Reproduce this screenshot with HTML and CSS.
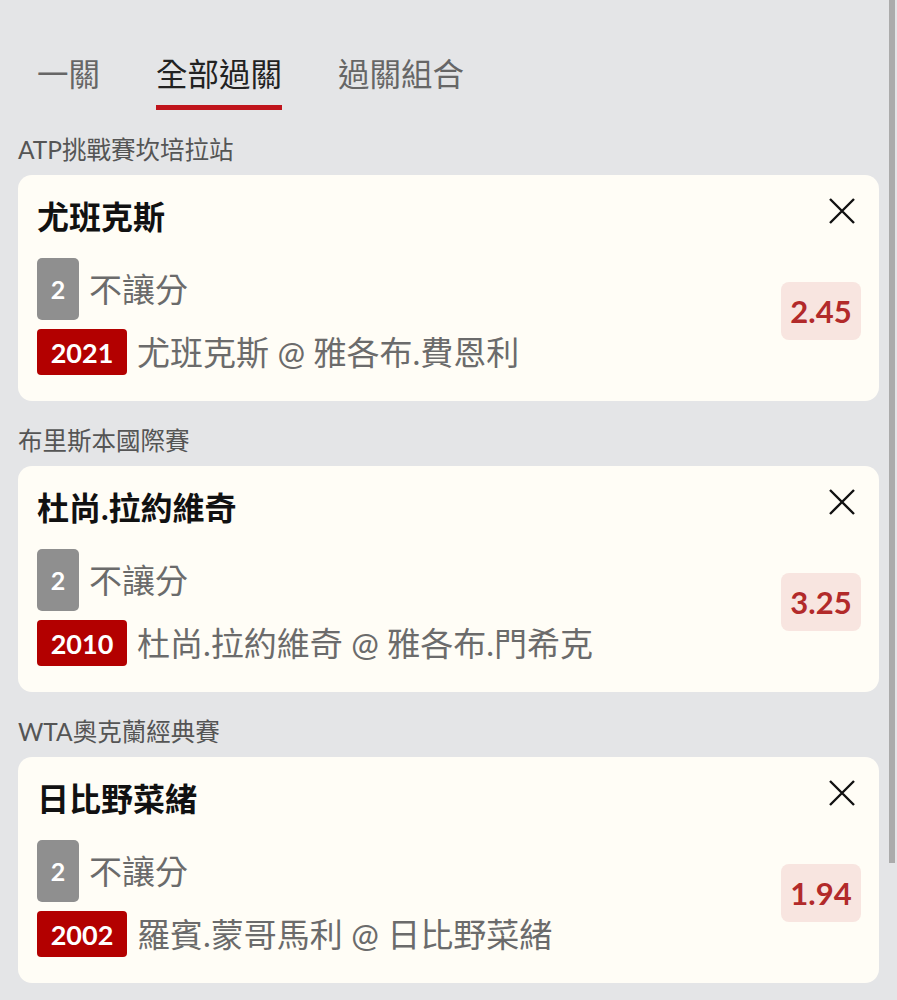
FILE: index.html
```html
<!DOCTYPE html>
<html lang="zh-Hant">
<head>
    <meta charset="UTF-8">
    <meta name="viewport" content="width=device-width, initial-scale=1.0">
    <title>過關</title>
    <link rel="stylesheet" href="styles.css">
</head>
<body>
    <div id="page">
        <nav class="tabs">
            <div class="tab">一關</div>
            <div class="tab active">全部過關</div>
            <div class="tab">過關組合</div>
        </nav>

        <div class="league">ATP挑戰賽坎培拉站</div>
        <div class="pick">
            <div class="pick-main">
                <div class="pick-title">尤班克斯</div>
                <div class="pick-row">
                    <span class="bet-type">2</span>
                    <span class="pick-text">不讓分</span>
                </div>
                <div class="pick-row">
                    <span class="match-no">2021</span>
                    <span class="pick-text">尤班克斯 @ 雅各布.費恩利</span>
                </div>
            </div>
            <div class="pick-side">
                <button class="close" aria-label="移除">
                    <svg viewBox="0 0 28 28" width="28" height="28"><path d="M2 2 L26 26 M26 2 L2 26"/></svg>
                </button>
                <div class="odds">2.45</div>
            </div>
        </div>

        <div class="league">布里斯本國際賽</div>
        <div class="pick">
            <div class="pick-main">
                <div class="pick-title">杜尚.拉約維奇</div>
                <div class="pick-row">
                    <span class="bet-type">2</span>
                    <span class="pick-text">不讓分</span>
                </div>
                <div class="pick-row">
                    <span class="match-no">2010</span>
                    <span class="pick-text">杜尚.拉約維奇 @ 雅各布.門希克</span>
                </div>
            </div>
            <div class="pick-side">
                <button class="close" aria-label="移除">
                    <svg viewBox="0 0 28 28" width="28" height="28"><path d="M2 2 L26 26 M26 2 L2 26"/></svg>
                </button>
                <div class="odds">3.25</div>
            </div>
        </div>

        <div class="league">WTA奧克蘭經典賽</div>
        <div class="pick">
            <div class="pick-main">
                <div class="pick-title">日比野菜緒</div>
                <div class="pick-row">
                    <span class="bet-type">2</span>
                    <span class="pick-text">不讓分</span>
                </div>
                <div class="pick-row">
                    <span class="match-no">2002</span>
                    <span class="pick-text">羅賓.蒙哥馬利 @ 日比野菜緒</span>
                </div>
            </div>
            <div class="pick-side">
                <button class="close" aria-label="移除">
                    <svg viewBox="0 0 28 28" width="28" height="28"><path d="M2 2 L26 26 M26 2 L2 26"/></svg>
                </button>
                <div class="odds">1.94</div>
            </div>
        </div>
    </div>
    <div class="scroll-thumb"></div>
</body>
</html>
```

FILE: styles.css
```css
/* Light grey page, Lato for digits and latin, Noto CJK for the rest */
body {
    margin: 0;
    background-color: #e4e5e7;
    font-family: Lato, "Noto Sans CJK TC", sans-serif;
    overflow: hidden;
}

#page {
    padding: 0 18px 20px;
}

/* Tabs */
.tabs {
    display: flex;
    gap: 56px;
    padding: 58px 0 0 19px;
}

.tab {
    font-size: 31.5px;
    line-height: 32px;
    color: #666;
    padding-bottom: 15px;
    border-bottom: 5px solid transparent;
}

.tab.active {
    color: #222;
    border-bottom-color: #c0141c;
}

.league {
    font-size: 24.5px;
    line-height: 24px;
    color: #555;
    margin: 28px 0 13px;
}

/* Pick card */
.pick {
    display: flex;
    justify-content: space-between;
    background-color: #fffdf6;
    border-radius: 14px;
    padding: 0 18px 26px 19px;
}

.pick-main {
    display: flex;
    flex-direction: column;
    padding-top: 26px;
}

.pick-title {
    font-size: 32px;
    line-height: 32px;
    font-weight: bold;
    color: #111;
    margin-bottom: 25px;
}

.pick-row {
    display: flex;
    align-items: center;
    gap: 10px;
}

.pick-row + .pick-row {
    margin-top: 9px;
}

.bet-type {
    width: 42px;
    height: 62px;
    border-radius: 5px;
    background-color: #8f8f8f;
    color: #fff;
    font-size: 25px;
    font-weight: bold;
    display: flex;
    justify-content: center;
    align-items: center;
}

.match-no {
    width: 90px;
    height: 46px;
    border-radius: 4px;
    background-color: #b30000;
    color: #fff;
    font-size: 27px;
    font-weight: bold;
    display: flex;
    justify-content: center;
    align-items: center;
}

.pick-text {
    font-size: 33px;
    line-height: 40px;
    color: #6b6b6b;
}

.pick-side {
    display: flex;
    flex-direction: column;
    align-items: flex-end;
    padding-top: 22px;
}

.close {
    border: none;
    background: none;
    padding: 0;
    margin-right: 5px;
    width: 28px;
    height: 28px;
    cursor: pointer;
}

.close svg {
    display: block;
    stroke: #111;
    stroke-width: 2.4;
    fill: none;
}

.odds {
    margin-top: 57px;
    width: 80px;
    height: 58px;
    border-radius: 8px;
    background-color: #f8e5e0;
    color: #b22a2a;
    font-size: 31px;
    font-weight: bold;
    display: flex;
    justify-content: center;
    align-items: center;
}

.scroll-thumb {
    position: fixed;
    top: 0;
    right: 2px;
    width: 6px;
    height: 863px;
    background-color: #ababab;
}
```
